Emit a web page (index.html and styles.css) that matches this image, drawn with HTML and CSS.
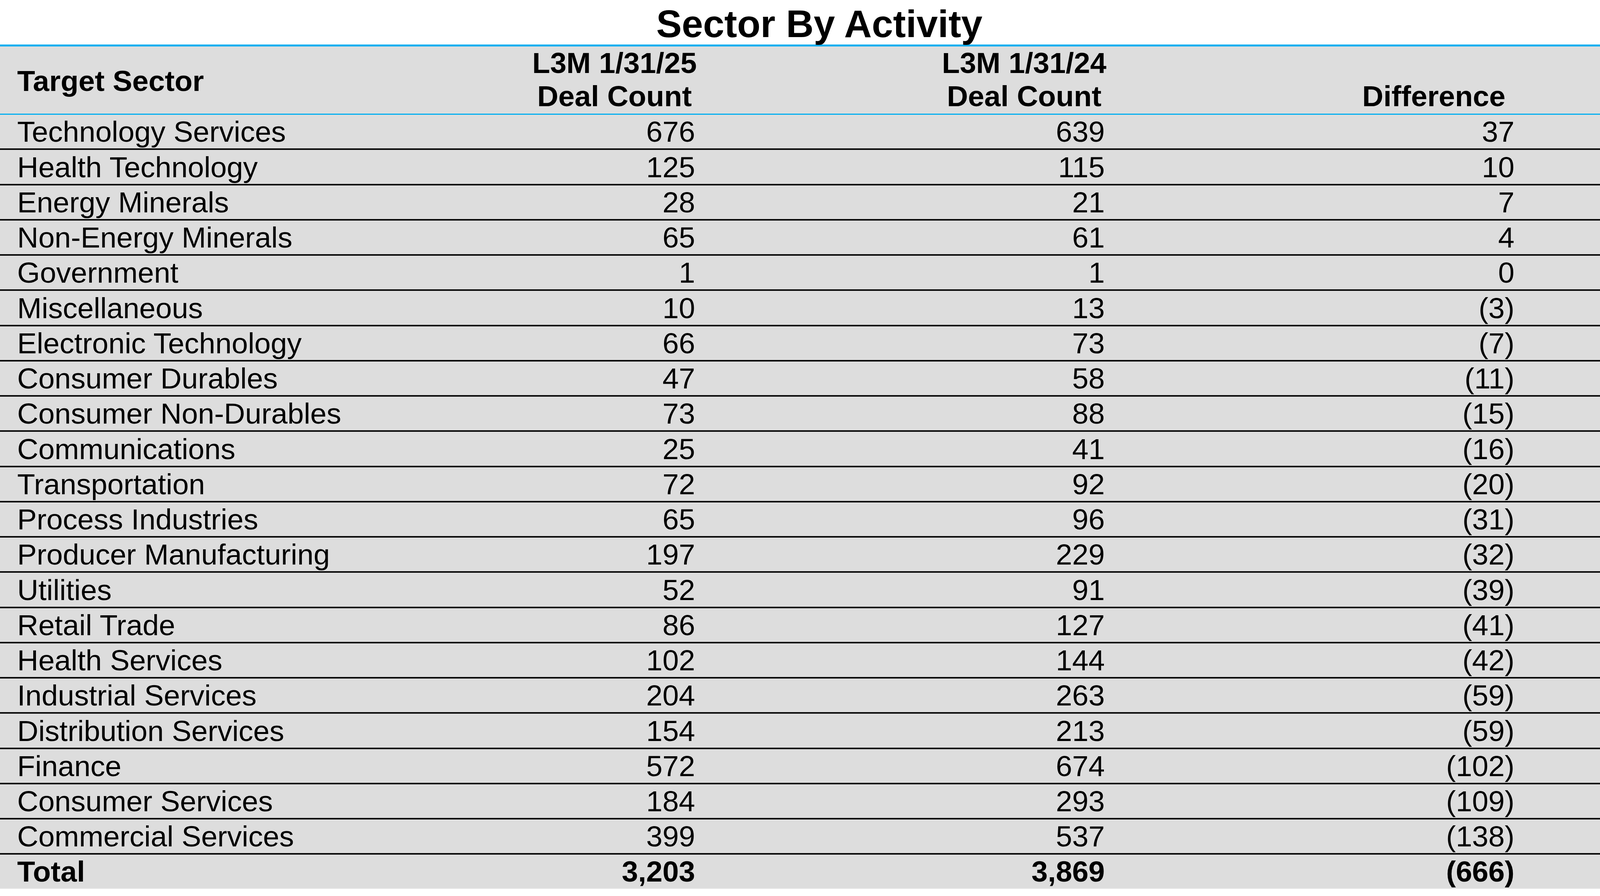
FILE: index.html
```html
<!DOCTYPE html>
<html lang="en">
<head>
<meta charset="utf-8">
<title>Sector By Activity</title>
<link rel="stylesheet" href="styles.css">
</head>
<body>
<div class="sheet">
  <h1 class="title">Sector By Activity</h1>
  <div class="table">
    <div class="row head">
      <div class="cell name mid">Target Sector</div>
      <div class="cell hnum">L3M 1/31/25<br>Deal Count</div>
      <div class="cell hnum">L3M 1/31/24<br>Deal Count</div>
      <div class="cell hnum">Difference</div>
    </div>
    <div class="row"><div class="cell name">Technology Services</div><div class="cell num">676</div><div class="cell num">639</div><div class="cell num">37</div></div>
    <div class="row"><div class="cell name">Health Technology</div><div class="cell num">125</div><div class="cell num">115</div><div class="cell num">10</div></div>
    <div class="row"><div class="cell name">Energy Minerals</div><div class="cell num">28</div><div class="cell num">21</div><div class="cell num">7</div></div>
    <div class="row"><div class="cell name">Non-Energy Minerals</div><div class="cell num">65</div><div class="cell num">61</div><div class="cell num">4</div></div>
    <div class="row"><div class="cell name">Government</div><div class="cell num">1</div><div class="cell num">1</div><div class="cell num">0</div></div>
    <div class="row"><div class="cell name">Miscellaneous</div><div class="cell num">10</div><div class="cell num">13</div><div class="cell num">(3)</div></div>
    <div class="row"><div class="cell name">Electronic Technology</div><div class="cell num">66</div><div class="cell num">73</div><div class="cell num">(7)</div></div>
    <div class="row"><div class="cell name">Consumer Durables</div><div class="cell num">47</div><div class="cell num">58</div><div class="cell num">(11)</div></div>
    <div class="row"><div class="cell name">Consumer Non-Durables</div><div class="cell num">73</div><div class="cell num">88</div><div class="cell num">(15)</div></div>
    <div class="row"><div class="cell name">Communications</div><div class="cell num">25</div><div class="cell num">41</div><div class="cell num">(16)</div></div>
    <div class="row"><div class="cell name">Transportation</div><div class="cell num">72</div><div class="cell num">92</div><div class="cell num">(20)</div></div>
    <div class="row"><div class="cell name">Process Industries</div><div class="cell num">65</div><div class="cell num">96</div><div class="cell num">(31)</div></div>
    <div class="row"><div class="cell name">Producer Manufacturing</div><div class="cell num">197</div><div class="cell num">229</div><div class="cell num">(32)</div></div>
    <div class="row"><div class="cell name">Utilities</div><div class="cell num">52</div><div class="cell num">91</div><div class="cell num">(39)</div></div>
    <div class="row"><div class="cell name">Retail Trade</div><div class="cell num">86</div><div class="cell num">127</div><div class="cell num">(41)</div></div>
    <div class="row"><div class="cell name">Health Services</div><div class="cell num">102</div><div class="cell num">144</div><div class="cell num">(42)</div></div>
    <div class="row"><div class="cell name">Industrial Services</div><div class="cell num">204</div><div class="cell num">263</div><div class="cell num">(59)</div></div>
    <div class="row"><div class="cell name">Distribution Services</div><div class="cell num">154</div><div class="cell num">213</div><div class="cell num">(59)</div></div>
    <div class="row"><div class="cell name">Finance</div><div class="cell num">572</div><div class="cell num">674</div><div class="cell num">(102)</div></div>
    <div class="row"><div class="cell name">Consumer Services</div><div class="cell num">184</div><div class="cell num">293</div><div class="cell num">(109)</div></div>
    <div class="row"><div class="cell name">Commercial Services</div><div class="cell num">399</div><div class="cell num">537</div><div class="cell num">(138)</div></div>
    <div class="row total"><div class="cell name">Total</div><div class="cell num">3,203</div><div class="cell num">3,869</div><div class="cell num">(666)</div></div>
  </div>
</div>
</body>
</html>
```

FILE: styles.css
```css
html, body {
  margin: 0;
  padding: 0;
  background: #ffffff;
}

body {
  font-family: "Liberation Sans", Arial, sans-serif;
  color: #000000;
}

.sheet {
  width: 4195px;
}

.title {
  margin: 0 0 4px 0;
  padding-top: 12px;
  font-size: 98px;
  line-height: 98px;
  font-weight: bold;
  text-align: center;
}

.table {
  background: #dddddd;
  border-top: 5px solid #06aff0;
  border-bottom: 2px solid #e8e8e8;
}

.row {
  display: grid;
  grid-template-columns: repeat(4, 1fr);
  box-sizing: border-box;
  height: 90.25px;
  border-bottom: 4px solid #0a0a0a;
  font-size: 75px;
  line-height: 85px;
}

.row.head {
  height: 175px;
  border-bottom: 3px solid #06aff0;
  font-weight: bold;
}

.row.total {
  height: 86px;
  border-bottom: none;
  font-weight: bold;
}

.cell {
  display: flex;
  flex-direction: column;
  justify-content: flex-end;
  white-space: nowrap;
}

.name {
  padding-left: 44px;
  align-items: flex-start;
}

.num {
  padding-right: 318px;
  align-items: flex-end;
}

.head .mid {
  justify-content: center;
  padding-top: 4px;
}

.hnum {
  text-align: center;
  align-items: center;
  padding-bottom: 2px;
}
```
